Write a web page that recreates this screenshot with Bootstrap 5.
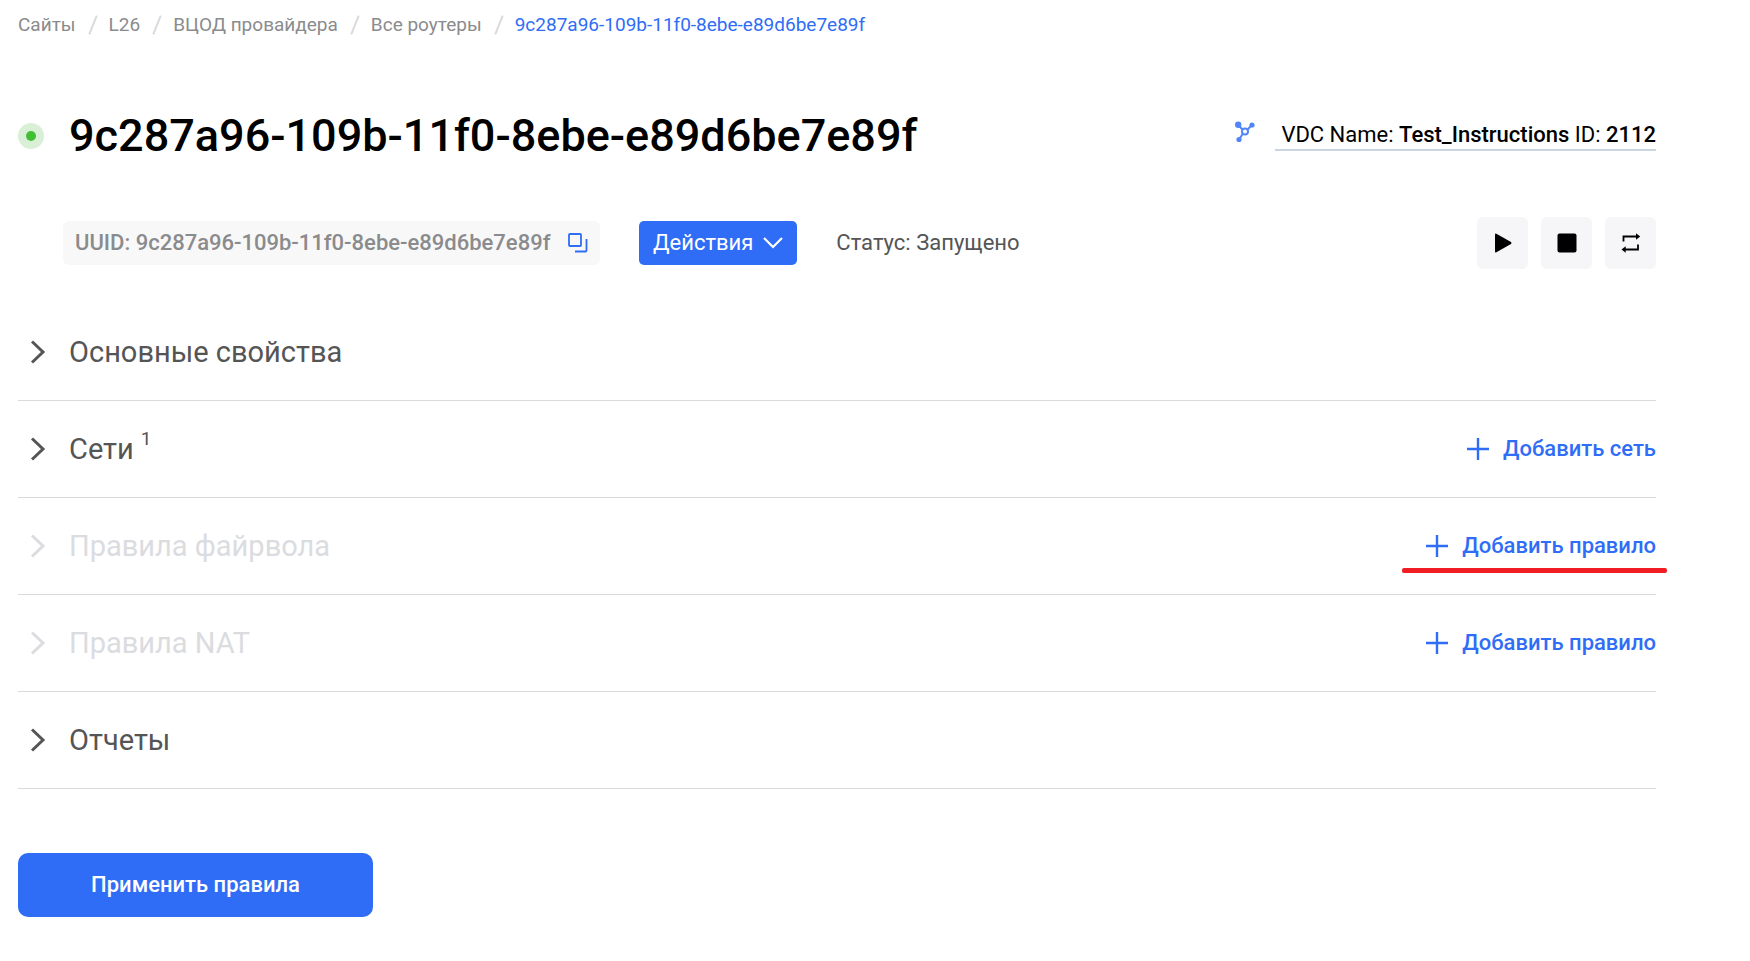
<!DOCTYPE html>
<html lang="ru">
<head>
<meta charset="utf-8">
<meta name="viewport" content="width=device-width, initial-scale=1">
<title>Роутер 9c287a96-109b-11f0-8ebe-e89d6be7e89f</title>
<link href="https://cdn.jsdelivr.net/npm/bootstrap@5.3.0/dist/css/bootstrap.min.css" rel="stylesheet">
<style>
:root { --accent: #2f6df6; --ink: #555; --line: #d9dadd; }
body { font-family: Roboto, "Noto Sans", sans-serif; font-size: 22px; line-height: 28px; color: var(--ink); background: #fff; }
svg { display: block; flex: none; }
.page { padding: 11px 94px 40px 18px; }
.breadcrumb { font-size: 19px; }
.breadcrumb a { color: #8a8b8d; text-decoration: none; }
.breadcrumb-item + .breadcrumb-item { padding-left: 12px; }
.breadcrumb-item + .breadcrumb-item::before { content: ""; width: 2px; height: 20px; margin: 4px 15px 0 4px; padding: 0; background: var(--line); transform: rotate(22deg); }
.breadcrumb .active { color: var(--accent); }
.page-head { margin-top: 65px; height: 64px; }
.page-title { font-size: 45px; line-height: 64px; font-weight: 500; color: #000; }
.status-dot { width: 26px; height: 26px; margin-right: 25px; background: #d9f0d7; }
.status-dot::after { content: ""; width: 10px; height: 10px; border-radius: 50%; background: #43bf36; }
.vdc-block { gap: 20px; }
.vdc-link { color: #000; text-decoration: none; border-bottom: 2px solid #cbd5e1; padding-left: 6px; }
.vdc-link b { font-weight: 500; }
.toolbar-row { margin-top: 49px; padding-left: 45px; }
.uuid-box { min-width: 537px; height: 44px; padding: 0 12px; background: #f8f8f8; border-radius: 6px; color: #8a8b8d; font-weight: 500; gap: 9px; }
.icon-only { border: 0; background: none; padding: 0; }
.btn-actions { --bs-btn-color: #fff; --bs-btn-bg: var(--accent); --bs-btn-hover-color: #fff; --bs-btn-hover-bg: #1f5be0; --bs-btn-active-bg: #1f5be0; --bs-btn-active-color: #fff; --bs-btn-border-width: 0; font-size: 22px; line-height: 28px; }
.btn-menu { height: 44px; margin-left: 39px; padding: 0 14px; gap: 10px; border-radius: 5px; }
.state-text { margin-left: 39px; }
.tool-set { gap: 13px; }
.tool-btn { width: 51px; height: 52px; border: 0; border-radius: 6px; background: #f6f6f8; color: #000; }
.sections { margin-top: 35px; }
.section-row { height: 97px; border-bottom: 1px solid var(--line); }
.section-toggle { font-size: 29px; line-height: 36px; color: var(--ink); gap: 23px; padding-left: 12px; }
.section-toggle:disabled { color: #dbdce0; }
.section-toggle sup { font-size: 19px; line-height: 20px; margin-left: 7px; top: -14px; }
.add-link { color: var(--accent); text-decoration: none; font-weight: 500; gap: 13px; }
.marked::after { content: ""; position: absolute; left: -23px; right: -11px; bottom: -13px; height: 5px; border-radius: 2px; background: #f01d24; }
.btn-apply { margin-top: 64px; width: 355px; height: 64px; border-radius: 10px; font-weight: 500; }
</style>
</head>
<body>
<main class="page">
  <nav aria-label="Навигация">
    <ol class="breadcrumb mb-0">
      <li class="breadcrumb-item"><a href="#">Сайты</a></li>
      <li class="breadcrumb-item"><a href="#">L26</a></li>
      <li class="breadcrumb-item"><a href="#">ВЦОД провайдера</a></li>
      <li class="breadcrumb-item"><a href="#">Все роутеры</a></li>
      <li class="breadcrumb-item active" aria-current="page">9c287a96-109b-11f0-8ebe-e89d6be7e89f</li>
    </ol>
  </nav>

  <header class="page-head d-flex align-items-center">
    <span class="status-dot rounded-circle d-flex align-items-center justify-content-center"></span>
    <h1 class="page-title mb-0">9c287a96-109b-11f0-8ebe-e89d6be7e89f</h1>
    <div class="vdc-block d-flex align-items-start ms-auto">
      <svg width="20" height="22" viewBox="0 0 20 22" fill="none" stroke="#5285f7" stroke-width="2"><path d="M3 4l4.500 4.500M17 4l-4.500 4.500M8 12.500l-4 6"/><circle cx="10" cy="10.500" r="3"/><g fill="#5285f7" stroke="none"><circle cx="3.200" cy="3.800" r="3.200"/><circle cx="17" cy="4" r="2.600"/><circle cx="4" cy="18.500" r="2.600"/></g></svg>
      <a class="vdc-link" href="#">VDC Name: <b>Test_Instructions</b> ID: <b>2112</b></a>
    </div>
  </header>

  <div class="toolbar-row d-flex align-items-center">
    <div class="uuid-box d-flex align-items-center justify-content-between">
      <span>UUID: 9c287a96-109b-11f0-8ebe-e89d6be7e89f</span>
      <button class="icon-only" type="button" aria-label="Копировать"><svg width="20" height="20" viewBox="0 0 20 20" fill="none" stroke="#2f6df6" stroke-width="1.800"><rect x="1" y="1" width="12" height="12" rx="1"/><path d="M18.500 6v11.500a1 1 0 0 1-1 1H7"/></svg></button>
    </div>
    <button class="btn btn-actions btn-menu d-flex align-items-center" type="button">Действия
      <svg width="20" height="12" viewBox="0 0 20 12" fill="none" stroke="#fff" stroke-width="2.200"><path d="M1 1l9 9 9-9"/></svg>
    </button>
    <span class="state-text">Статус: Запущено</span>
    <div class="d-flex ms-auto tool-set">
      <button class="tool-btn d-flex align-items-center justify-content-center" type="button" aria-label="Запустить"><svg width="18" height="20" viewBox="0 0 18 20"><path d="M1 1.500Q1 0 2.400.7L17 9q1 1 0 2L2.400 19.300Q1 20 1 18.500z"/></svg></button>
      <button class="tool-btn d-flex align-items-center justify-content-center" type="button" aria-label="Остановить"><svg width="20" height="20" viewBox="0 0 20 20"><rect x=".5" y=".5" width="19" height="19" rx="2"/></svg></button>
      <button class="tool-btn d-flex align-items-center justify-content-center" type="button" aria-label="Перезапустить"><svg width="20" height="20" viewBox="0 0 20 20" fill="none" stroke="#000" stroke-width="1.800"><path d="M2.500 8.500V3.500h14M17 11.500v5H3"/><path fill="#000" stroke="none" d="M15 .3l4.200 3.200L15 6.700zM4.700 13.300L.5 16.500l4.200 3.200z"/></svg></button>
    </div>
  </div>

  <div class="sections">
    <section class="section-row d-flex align-items-center justify-content-between">
      <button class="section-toggle icon-only d-flex align-items-center" type="button"><svg width="16" height="24" viewBox="0 0 16 24" fill="none" stroke="currentColor" stroke-width="3"><path d="M2 1.500L13 12 2 22.500"/></svg><span>Основные свойства</span></button>
    </section>
    <section class="section-row d-flex align-items-center justify-content-between">
      <button class="section-toggle icon-only d-flex align-items-center" type="button"><svg width="16" height="24" viewBox="0 0 16 24" fill="none" stroke="currentColor" stroke-width="3"><path d="M2 1.500L13 12 2 22.500"/></svg><span>Сети<sup>1</sup></span></button>
      <a class="add-link d-flex align-items-center" href="#"><svg width="24" height="24" viewBox="0 0 24 24" stroke="currentColor" stroke-width="2.400"><path d="M12 1v22M1 12h22"/></svg>Добавить сеть</a>
    </section>
    <section class="section-row d-flex align-items-center justify-content-between">
      <button class="section-toggle icon-only d-flex align-items-center" type="button" disabled><svg width="16" height="24" viewBox="0 0 16 24" fill="none" stroke="currentColor" stroke-width="3"><path d="M2 1.500L13 12 2 22.500"/></svg><span>Правила файрвола</span></button>
      <a class="add-link marked position-relative d-flex align-items-center" href="#"><svg width="24" height="24" viewBox="0 0 24 24" stroke="currentColor" stroke-width="2.400"><path d="M12 1v22M1 12h22"/></svg>Добавить правило</a>
    </section>
    <section class="section-row d-flex align-items-center justify-content-between">
      <button class="section-toggle icon-only d-flex align-items-center" type="button" disabled><svg width="16" height="24" viewBox="0 0 16 24" fill="none" stroke="currentColor" stroke-width="3"><path d="M2 1.500L13 12 2 22.500"/></svg><span>Правила NAT</span></button>
      <a class="add-link d-flex align-items-center" href="#"><svg width="24" height="24" viewBox="0 0 24 24" stroke="currentColor" stroke-width="2.400"><path d="M12 1v22M1 12h22"/></svg>Добавить правило</a>
    </section>
    <section class="section-row d-flex align-items-center justify-content-between">
      <button class="section-toggle icon-only d-flex align-items-center" type="button"><svg width="16" height="24" viewBox="0 0 16 24" fill="none" stroke="currentColor" stroke-width="3"><path d="M2 1.500L13 12 2 22.500"/></svg><span>Отчеты</span></button>
    </section>
  </div>

  <button class="btn btn-actions btn-apply" type="button">Применить правила</button>
</main>
<script src="https://cdn.jsdelivr.net/npm/bootstrap@5.3.0/dist/js/bootstrap.bundle.min.js"></script>
</body>
</html>
